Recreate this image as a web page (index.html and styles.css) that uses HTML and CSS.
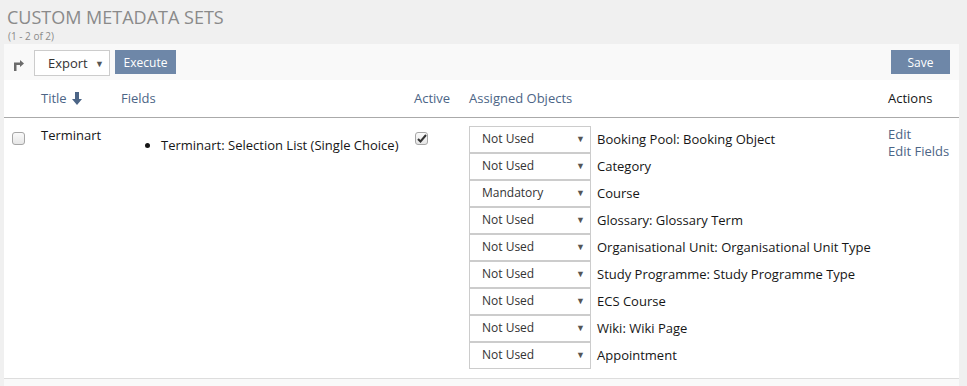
FILE: index.html
```html
<!DOCTYPE html>
<html>
<head>
<meta charset="utf-8">
<link rel="stylesheet" href="styles.css">
</head>
<body>
<div class="page">
  <h1 class="title">Custom Metadata Sets</h1>
  <div class="count">(1 - 2 of 2)</div>
  <div class="panel">
    <div class="toolbar">
      <svg class="sel-icon" width="11" height="14" viewBox="0 0 11 14"><path d="M1 14V5.5h6V3l4 3.5-4 3.5V8H3.5v6z" fill="#6b6b6b"/></svg>
      <div class="select export"><span>Export</span><span class="caret">▼</span></div>
      <button class="btn exec">Execute</button>
      <div class="spacer"></div>
      <button class="btn save">Save</button>
    </div>
    <table class="tbl">
      <thead>
        <tr>
          <th class="c-check"></th>
          <th class="c-title">Title <svg class="sort" width="10" height="13" viewBox="0 0 10 13"><path d="M3 0h4v7h3l-5 6-5-6h3z" fill="#4c6586"/></svg></th>
          <th class="c-fields">Fields</th>
          <th class="c-active">Active</th>
          <th class="c-assigned">Assigned Objects</th>
          <th class="c-actions">Actions</th>
        </tr>
      </thead>
      <tbody>
        <tr>
          <td class="c-check"><span class="cb"></span></td>
          <td class="c-title">Terminart</td>
          <td class="c-fields"><ul class="flist"><li>Terminart: Selection List (Single Choice)</li></ul></td>
          <td class="c-active"><span class="cb checked"><svg width="10" height="9" viewBox="0 0 10 9"><path d="M1 5l2.5 2.5L9 1" stroke="#333" stroke-width="2" fill="none"/></svg></span></td>
          <td class="c-assigned">
            <div class="assign"><div class="select obj"><span>Not Used</span><span class="caret">▼</span></div><span>Booking Pool: Booking Object</span></div>
            <div class="assign"><div class="select obj"><span>Not Used</span><span class="caret">▼</span></div><span>Category</span></div>
            <div class="assign"><div class="select obj"><span>Mandatory</span><span class="caret">▼</span></div><span>Course</span></div>
            <div class="assign"><div class="select obj"><span>Not Used</span><span class="caret">▼</span></div><span>Glossary: Glossary Term</span></div>
            <div class="assign"><div class="select obj"><span>Not Used</span><span class="caret">▼</span></div><span>Organisational Unit: Organisational Unit Type</span></div>
            <div class="assign"><div class="select obj"><span>Not Used</span><span class="caret">▼</span></div><span>Study Programme: Study Programme Type</span></div>
            <div class="assign"><div class="select obj"><span>Not Used</span><span class="caret">▼</span></div><span>ECS Course</span></div>
            <div class="assign"><div class="select obj"><span>Not Used</span><span class="caret">▼</span></div><span>Wiki: Wiki Page</span></div>
            <div class="assign"><div class="select obj"><span>Not Used</span><span class="caret">▼</span></div><span>Appointment</span></div>
          </td>
          <td class="c-actions"><a class="lnk">Edit</a><a class="lnk">Edit Fields</a></td>
        </tr>
      </tbody>
    </table>
    <div class="footer"></div>
  </div>
</div>
</body>
</html>
```

FILE: styles.css
```css
* { box-sizing: border-box; }
html, body { margin: 0; padding: 0; }
body {
  background: #f0f0f0;
  font-family: "Open Sans", "Liberation Sans", sans-serif;
  font-size: 13px;
  color: #161616;
  width: 967px;
  height: 386px;
  overflow: hidden;
}
.page { padding: 5px 8px 0 4px; }
.title {
  margin: 0 0 0 3px;
  font-weight: 400;
  font-size: 18px;
  line-height: 25px;
  text-transform: uppercase;
  color: #8a8a8a;
}
.count {
  margin-left: 4px;
  font-size: 10px;
  line-height: 12px;
  color: #8a8a8a;
  height: 14px;
}
.panel { background: #fff; }
.toolbar {
  display: flex;
  align-items: center;
  height: 36px;
  background: #f9f9f9;
  padding: 0 9px 0 9px;
}
.sel-icon { margin: 3px 10px 0 0; }
.select {
  display: flex;
  align-items: center;
  justify-content: space-between;
  background: #fff;
  border: 1px solid #ccc;
  color: #333;
}
.select .caret { font-size: 9px; color: #555; }
.export { width: 76px; height: 26px; padding: 0 5px 0 13px; margin-top: 2px; flex: none; }
.btn {
  font-family: inherit;
  font-size: 12px;
  color: #fff;
  background: #6e87a8;
  border: none;
  height: 24px;
  padding: 0;
}
.exec { width: 61px; margin-left: 5px; }
.save { width: 59px; }
.spacer { flex: 1; }
.tbl { border-collapse: collapse; width: 955px; table-layout: fixed; }
.tbl th {
  font-weight: 400;
  color: #4c6586;
  text-align: left;
  height: 37px;
  padding: 0 6px;
  border-bottom: 1px solid #aaa;
  vertical-align: middle;
  font-size: 13px;
}
.tbl th.c-actions { color: #161616; }
.tbl td { vertical-align: top; padding: 8px 6px 9px 6px; line-height: 18px; }
.c-check { width: 31px; }
.c-title { width: 80px; }
.c-fields { width: 293px; }
.c-active { width: 55px; }
.c-assigned { width: 419px; }
.c-actions { width: 77px; }
.sort { vertical-align: -2px; margin-left: 2px; }
td.c-check { padding-left: 8px; padding-top: 13px; }
.cb {
  display: inline-block;
  width: 13px;
  height: 13px;
  border: 1px solid #a6a6a6;
  border-radius: 3px;
  background: linear-gradient(#fafafa, #e6e6e6);
}
td.c-active { padding-top: 13px; padding-left: 7px; }
.cb.checked { position: relative; }
.cb.checked svg { position: absolute; left: 1px; top: 1px; }
.flist { margin: 10px 0 0 0; padding-left: 40px; }
.assign { display: flex; align-items: center; height: 27px; }
.obj { width: 122px; height: 27px; padding: 0 5px 0 12px; margin-right: 6px; font-size: 12px; flex: none; }
.lnk { display: block; color: #4c6586; line-height: 17px; }
td.c-actions { padding-top: 8px; }
.footer { height: 8px; border-top: 1px solid #ddd; background: #f9f9f9; }
```
